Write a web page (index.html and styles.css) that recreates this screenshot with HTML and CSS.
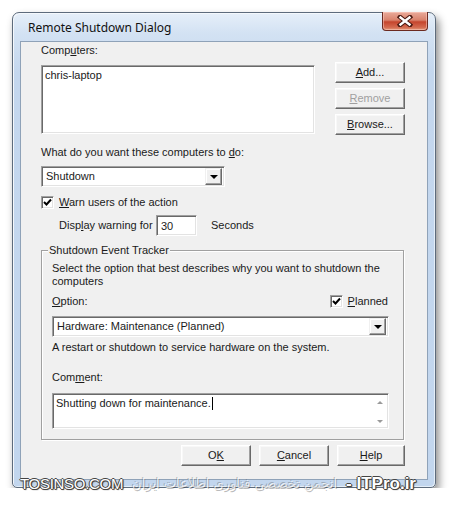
FILE: index.html
```html
<!DOCTYPE html>
<html lang="en">
<head>
    <meta charset="UTF-8">
    <title>Remote Shutdown Dialog</title>
    <link rel="stylesheet" href="styles.css">
</head>
<body>

<div class="window">
    <div class="titlebar">
        <span class="title">Remote Shutdown Dialog</span>
        <div class="close">
            <svg width="16" height="12" viewBox="0 0 16 12">
                <path d="M3 2 L13 10 M13 2 L3 10" stroke="#4a1a12" stroke-width="4.5" stroke-linecap="square"/>
                <path d="M3.5 2.5 L12.5 9.5 M12.5 2.5 L3.5 9.5" stroke="#ffffff" stroke-width="2.4" stroke-linecap="square"/>
            </svg>
        </div>
    </div>

    <div class="client">
        <div class="label">Comp<u>u</u>ters:</div>
        <div class="computers-row">
            <div class="listbox sunken">chris-laptop</div>
            <div class="side-buttons">
                <div class="btn"><u>A</u>dd...</div>
                <div class="btn disabled"><u>R</u>emove</div>
                <div class="btn"><u>B</u>rowse...</div>
            </div>
        </div>

        <div class="label question">What do you want these computers to <u>d</u>o:</div>
        <div class="combo sunken action-combo">
            <span>Shutdown</span>
            <div class="drop"><i></i></div>
        </div>

        <div class="check-row warn-row">
            <div class="checkbox sunken">
                <svg width="9" height="9" viewBox="0 0 9 9"><polyline points="1,4 3.5,6.5 8,1.5" fill="none" stroke="#000" stroke-width="2"/></svg>
            </div>
            <span><u>W</u>arn users of the action</span>
        </div>

        <div class="warning-row">
            <span class="warning-label">Disp<u>l</u>ay warning for</span>
            <div class="textbox sunken">30</div>
            <span>Seconds</span>
        </div>

        <fieldset class="group">
            <legend>Shutdown Event Tracker</legend>
            <div class="intro">Select the option that best describes why you want to shutdown the computers</div>

            <div class="option-row">
                <span><u>O</u>ption:</span>
                <div class="check-row">
                    <div class="checkbox sunken">
                        <svg width="9" height="9" viewBox="0 0 9 9"><polyline points="1,4 3.5,6.5 8,1.5" fill="none" stroke="#000" stroke-width="2"/></svg>
                    </div>
                    <span><u>P</u>lanned</span>
                </div>
            </div>
            <div class="combo sunken option-combo">
                <span>Hardware: Maintenance (Planned)</span>
                <div class="drop"><i></i></div>
            </div>
            <div class="description">A restart or shutdown to service hardware on the system.</div>

            <div class="label comment-label">Com<u>m</u>ent:</div>
            <div class="comment sunken">
                <span>Shutting down for maintenance.<b class="caret"></b></span>
                <div class="scroll">
                    <i class="up"></i>
                    <i class="down"></i>
                </div>
            </div>
        </fieldset>

        <div class="dialog-buttons">
            <div class="btn">O<u>K</u></div>
            <div class="btn"><u>C</u>ancel</div>
            <div class="btn help"><u>H</u>elp</div>
        </div>
    </div>
</div>

<div class="watermark">
    <span class="site">TOSINSO.COM</span>
    <span class="persian" dir="rtl">انجمن تخصصی فناوری اطلاعات ایران</span>
    <span class="site big">- ITPro.ir</span>
</div>

</body>
</html>
```

FILE: styles.css
```css
body {
    margin: 0;
    background: #ffffff;
    font-family: "Liberation Sans", Arial, sans-serif;
    font-size: 11px;
    line-height: 13px;
    color: #1a1a1a;
}
u {
    text-decoration-thickness: 1px;
    text-underline-offset: 1px;
}

/* window frame */
.window {
    position: relative;
    box-sizing: border-box;
    width: 424px;
    height: 476px;
    margin: 12px 0 0 12px;
    padding: 0 7px 7px 7px;
    border: 1px solid #5d6b7c;
    border-radius: 7px 7px 5px 5px;
    background: linear-gradient(to bottom, #e6eff9 0, #d3e2f3 20px, #c4d7ee 60px, #c2d6ee 100%);
    box-shadow: 3px 5px 9px rgba(0, 0, 0, 0.45), inset 1px 1px 0 #f4f8fc, inset -1px -1px 0 #e4eef8;
}
.titlebar {
    height: 28px;
    display: flex;
    align-items: center;
    padding-left: 8px;
}
.title {
    font-family: "Noto Sans", "Open Sans", sans-serif;
    font-size: 12px;
    color: #111;
}
.close {
    position: absolute;
    top: -1px;
    right: 7px;
    width: 46px;
    height: 19px;
    box-sizing: border-box;
    border: 1px solid #6b2a20;
    border-top: none;
    border-radius: 0 0 4px 4px;
    background: linear-gradient(to bottom, #e9aa9a 0, #d9826c 45%, #c5452d 55%, #d46a4f 85%, #e29a7a 100%);
    display: flex;
    align-items: center;
    justify-content: center;
    box-shadow: inset 0 0 0 1px rgba(255, 210, 200, 0.5);
}

/* client area */
.client {
    box-sizing: border-box;
    height: 439px;
    padding: 2px 0 0 20px;
    background: #f0f0f0;
    border: 1px solid #8fa2b8;
}

/* classic 3d bits */
.sunken {
    box-sizing: border-box;
    background: #ffffff;
    border: 1px solid;
    border-color: #a0a0a0 #ffffff #ffffff #a0a0a0;
    box-shadow: inset 1px 1px 0 #696969, inset -1px -1px 0 #e3e3e3;
}
.btn {
    box-sizing: border-box;
    width: 70px;
    height: 21px;
    display: flex;
    align-items: center;
    justify-content: center;
    background: #f0f0f0;
    border: 1px solid;
    border-color: #ffffff #696969 #696969 #ffffff;
    box-shadow: inset -1px -1px 0 #a0a0a0, inset 1px 1px 0 #f8f8f8;
}
.btn.disabled {
    color: #a0a0a0;
}

.computers-row {
    display: flex;
    align-items: flex-start;
    gap: 20px;
    margin-top: 5px;
}
.listbox {
    width: 274px;
    height: 69px;
    margin-top: 3px;
    padding: 3px 3px;
}
.side-buttons {
    display: flex;
    flex-direction: column;
    gap: 5px;
}

.question {
    margin-top: 11px;
}

.combo {
    height: 21px;
    display: flex;
    align-items: center;
    justify-content: space-between;
    padding: 2px 2px 2px 4px;
}
.action-combo {
    width: 184px;
    margin-top: 7px;
}
.drop {
    box-sizing: border-box;
    width: 17px;
    height: 17px;
    display: flex;
    align-items: center;
    justify-content: center;
    background: #f0f0f0;
    border: 1px solid;
    border-color: #f0f0f0 #696969 #696969 #f0f0f0;
    box-shadow: inset -1px -1px 0 #a0a0a0, inset 1px 1px 0 #ffffff;
}
.drop i {
    width: 0;
    height: 0;
    margin-top: 1px;
    border-left: 4px solid transparent;
    border-right: 4px solid transparent;
    border-top: 4px solid #000;
}

.check-row {
    display: flex;
    align-items: center;
    gap: 5px;
}
.warn-row {
    margin-top: 9px;
}
.checkbox {
    width: 13px;
    height: 13px;
    display: flex;
    align-items: center;
    justify-content: center;
}

.warning-row {
    display: flex;
    align-items: center;
    margin: 6px 0 0 18px;
}
.warning-label {
    width: 97px;
}
.textbox {
    width: 41px;
    height: 21px;
    padding: 4px 0 0 4px;
    margin-right: 14px;
}

/* shutdown event tracker */
.group {
    width: 363px;
    box-sizing: border-box;
    margin: 8px 0 0 0;
    padding: 0 14px 10px 10px;
    border: 1px solid #a0a0a0;
    box-shadow: inset 1px 1px 0 #ffffff, 1px 1px 0 #ffffff;
}
.group legend {
    position: relative;
    margin-left: -4px;
    padding: 0 1px;
    background: #f0f0f0;
}
.intro {
    margin-top: 5px;
    width: 330px;
}
.option-row {
    display: flex;
    justify-content: space-between;
    margin-top: 7px;
    padding-right: 1px;
}
.option-combo {
    margin-top: 8px;
}
.description {
    margin-top: 4px;
}
.comment-label {
    margin-top: 17px;
}
.comment {
    height: 36px;
    margin-top: 9px;
    display: flex;
    justify-content: space-between;
    padding: 3px 3px 3px 3px;
}
.caret {
    display: inline-block;
    width: 1px;
    height: 13px;
    margin-left: 1px;
    vertical-align: top;
    background: #000;
}
.scroll {
    width: 11px;
    display: flex;
    flex-direction: column;
    justify-content: space-between;
    align-items: center;
    padding: 4px 0 2px 0;
}
.scroll i {
    width: 0;
    height: 0;
    border-left: 3px solid transparent;
    border-right: 3px solid transparent;
}
.scroll .up {
    border-bottom: 3px solid #9a9a9a;
}
.scroll .down {
    border-top: 3px solid #9a9a9a;
}

.dialog-buttons {
    display: flex;
    justify-content: flex-end;
    gap: 8px;
    margin: 5px 22px 0 0;
}
.dialog-buttons .help {
    width: 68px;
}

/* watermark laid over the screenshot */
.watermark {
    position: absolute;
    left: 20px;
    top: 477px;
    width: 396px;
    display: flex;
    align-items: center;
    justify-content: space-between;
}
.site {
    font-family: "Liberation Sans", Arial, sans-serif;
    font-size: 15px;
    letter-spacing: -0.3px;
    color: #ffffff;
    text-shadow: 1px 0 0 #444, -1px 0 0 #444, 0 1px 0 #444, 0 -1px 0 #444, 1px 1px 1px #333;
}
.site.big {
    font-size: 17px;
    font-weight: bold;
    letter-spacing: 0;
}
.persian {
    font-family: "DejaVu Sans", sans-serif;
    font-size: 13px;
    color: rgba(255, 255, 255, 0.75);
    text-shadow: 1px 1px 0 rgba(60, 60, 60, 0.35), -1px -1px 0 rgba(60, 60, 60, 0.3);
}
```
